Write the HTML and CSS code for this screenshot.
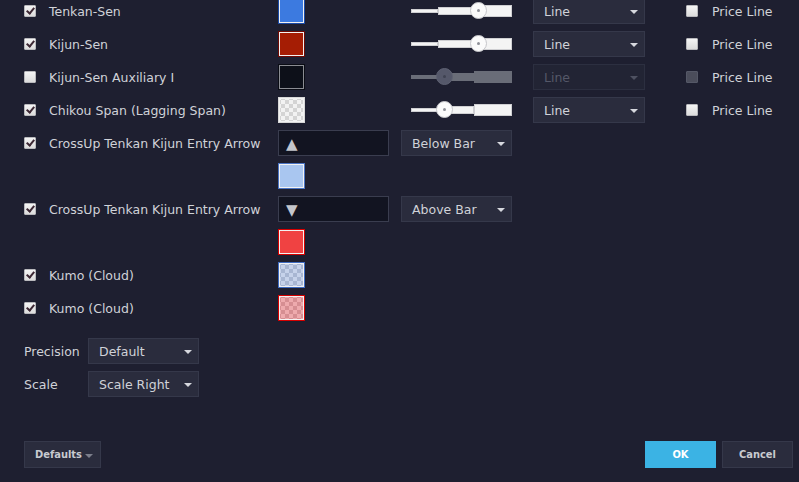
FILE: index.html
```html
<!DOCTYPE html>
<html lang="en">
<head>
  <meta charset="UTF-8">
  <title>Ichimoku - Style</title>
  <link rel="stylesheet" href="styles.css">
</head>
<body>
  <div class="dialog">
    <div class="rows">
      <!-- Lines -->
      <div class="row">
        <label class="name"><span class="check on"></span>Tenkan-Sen</label>
        <span class="swatch blue"></span>
        <div class="slider"><i class="s1"></i><i class="s2"></i><i class="s3"></i><b class="thumb" style="left: 59px"></b></div>
        <div class="select line">Line<span class="caret"></span></div>
        <label class="price"><span class="check"></span>Price Line</label>
      </div>
      <div class="row">
        <label class="name"><span class="check on"></span>Kijun-Sen</label>
        <span class="swatch red"></span>
        <div class="slider"><i class="s1"></i><i class="s2"></i><i class="s3"></i><b class="thumb" style="left: 59px"></b></div>
        <div class="select line">Line<span class="caret"></span></div>
        <label class="price"><span class="check"></span>Price Line</label>
      </div>
      <div class="row">
        <label class="name"><span class="check"></span>Kijun-Sen Auxiliary I</label>
        <span class="swatch black"></span>
        <div class="slider disabled"><i class="s1"></i><i class="s2"></i><i class="s3"></i><b class="thumb" style="left: 25px"></b></div>
        <div class="select line disabled">Line<span class="caret"></span></div>
        <label class="price"><span class="check disabled"></span>Price Line</label>
      </div>
      <div class="row">
        <label class="name"><span class="check on"></span>Chikou Span (Lagging Span)</label>
        <span class="swatch clear"></span>
        <div class="slider"><i class="s1"></i><i class="s2"></i><i class="s3"></i><b class="thumb" style="left: 25px"></b></div>
        <div class="select line">Line<span class="caret"></span></div>
        <label class="price"><span class="check"></span>Price Line</label>
      </div>

      <!-- Arrows -->
      <div class="row">
        <label class="name"><span class="check on"></span>CrossUp Tenkan Kijun Entry Arrow</label>
        <div class="symbol">▲</div>
        <div class="select place">Below Bar<span class="caret"></span></div>
      </div>
      <div class="row">
        <span class="name"></span>
        <span class="swatch sky"></span>
      </div>
      <div class="row">
        <label class="name"><span class="check on"></span>CrossUp Tenkan Kijun Entry Arrow</label>
        <div class="symbol">▼</div>
        <div class="select place">Above Bar<span class="caret"></span></div>
      </div>
      <div class="row">
        <span class="name"></span>
        <span class="swatch coral"></span>
      </div>

      <!-- Cloud -->
      <div class="row">
        <label class="name"><span class="check on"></span>Kumo (Cloud)</label>
        <span class="swatch cloud-up"></span>
      </div>
      <div class="row">
        <label class="name"><span class="check on"></span>Kumo (Cloud)</label>
        <span class="swatch cloud-down"></span>
      </div>
    </div>

    <div class="props">
      <div class="prop">
        <span class="prop-label">Precision</span>
        <div class="select">Default<span class="caret"></span></div>
      </div>
      <div class="prop">
        <span class="prop-label">Scale</span>
        <div class="select">Scale Right<span class="caret"></span></div>
      </div>
    </div>

    <div class="footer">
      <button class="btn">Defaults<span class="caret"></span></button>
      <div class="actions">
        <button class="btn ok">OK</button>
        <button class="btn">Cancel</button>
      </div>
    </div>
  </div>
</body>
</html>
```

FILE: styles.css
```css
body {
  margin: 0;
  background-color: #1e1f30;
  color: #d0d2d8;
  font-family: "DejaVu Sans", "Liberation Sans", sans-serif;
  font-size: 12.5px;
  overflow: hidden;
}
.dialog {
  width: 799px;
  height: 482px;
  box-sizing: border-box;
  padding: 0 6px 0 24px;
  display: flex;
  flex-direction: column;
}
.rows {
  margin-top: -2px;
}
.row {
  display: flex;
  align-items: center;
  height: 26px;
  margin-bottom: 7px;
}
.name {
  width: 254px;
  flex-shrink: 0;
  display: flex;
  align-items: center;
  gap: 13px;
  padding-top: 1px;
  white-space: nowrap;
}

/* checkbox */
.check {
  width: 12px;
  height: 12px;
  box-sizing: border-box;
  border: 1px solid #b9b9bd;
  border-radius: 1px;
  background: linear-gradient(#f4f4f4, #dcdcdc);
  position: relative;
  flex-shrink: 0;
  margin-top: -1px;
}
.check.on::after {
  content: "";
  position: absolute;
  left: 3px;
  top: 0px;
  width: 3px;
  height: 6px;
  border: solid #3d2834;
  border-width: 0 2px 2px 0;
  transform: rotate(40deg);
}
.check.disabled {
  background: #4b4d5b;
  border-color: #555867;
}

/* colour swatches */
.swatch {
  width: 27px;
  height: 26px;
  box-sizing: border-box;
  border: 1px solid #888;
  box-shadow: inset 0 0 0 1px #f2f2f2;
  flex-shrink: 0;
}
.swatch.blue { background: #3c7ae0; border-color: #1a4aa6; }
.swatch.red { background: #a51d04; border-color: #6e0a04; }
.swatch.black { background: #0d1019; border-color: #0a0c14; box-shadow: inset 0 0 0 1px #8a8c92; }
.swatch.clear {
  border-color: #d8d8d8;
  background: repeating-conic-gradient(#d4d4d4 0 25%, #f2f2f2 0 50%) 2px 2px / 8px 8px;
}
.swatch.sky { background: #a9c6f0; border-color: #4a74c4; }
.swatch.coral { background: #f04242; border-color: #d60000; }
.swatch.cloud-up {
  border-color: #3f6cc2;
  background: repeating-conic-gradient(#a8b6d2 0 25%, #c6d2ea 0 50%) 2px 2px / 8px 8px;
}
.swatch.cloud-down {
  border-color: #d60000;
  background: repeating-conic-gradient(#d68e92 0 25%, #eeaaad 0 50%) 2px 2px / 8px 8px;
}

/* width slider */
.slider {
  margin-left: 106px;
  width: 101px;
  height: 18px;
  display: flex;
  align-items: center;
  position: relative;
  flex-shrink: 0;
}
.slider i {
  box-sizing: border-box;
  background: #f4f4f4;
  border: 1px solid #cfcfd2;
}
.slider .s1 { width: 27px; height: 4px; }
.slider .s2 { width: 36px; height: 8px; }
.slider .s3 { width: 38px; height: 12px; }
.thumb {
  position: absolute;
  top: 0;
  width: 17px;
  height: 17px;
  box-sizing: border-box;
  border-radius: 50%;
  background: #fbfbfb;
  border: 1px solid #c6c6ca;
}
.thumb::after {
  content: "";
  position: absolute;
  left: 6px;
  top: 6px;
  width: 3px;
  height: 3px;
  border-radius: 50%;
  background: #8e9098;
}
.slider.disabled i {
  background: #6a6d78;
  border-color: #6a6d78;
}
.slider.disabled .thumb {
  background: #55586a;
  border-color: #5e6172;
}
.slider.disabled .thumb::after {
  background: #3f4252;
}

/* dropdowns */
.select {
  position: relative;
  width: 111px;
  height: 26px;
  box-sizing: border-box;
  padding: 1px 10px 0;
  line-height: 24px;
  background: #2a2c3d;
  border: 1px solid #35384a;
  white-space: nowrap;
  flex-shrink: 0;
}
.select.line {
  margin-left: 21px;
  width: 112px;
}
.select.place {
  margin-left: 12px;
}
.select.disabled {
  background: #222434;
  border-color: #2c2f40;
  color: #555868;
}
.caret {
  position: absolute;
  right: 6px;
  top: 11px;
  border-left: 4px solid transparent;
  border-right: 4px solid transparent;
  border-top: 4px solid #d6d8de;
}
.select.disabled .caret {
  border-top-color: #4e5161;
}
.price {
  margin-left: 41px;
  display: flex;
  align-items: center;
  gap: 14px;
  padding-top: 1px;
}

/* arrow symbol field */
.symbol {
  width: 111px;
  height: 26px;
  box-sizing: border-box;
  padding: 1px 0 0 7px;
  line-height: 24px;
  background: #121421;
  border: 1px solid #3a3d4f;
  color: #c4c6cc;
  font-size: 15px;
  flex-shrink: 0;
}

/* precision / scale */
.props {
  margin-top: 10px;
}
.prop {
  display: flex;
  align-items: center;
  height: 26px;
  margin-bottom: 7px;
}
.prop-label {
  width: 64px;
  padding-top: 1px;
}

/* buttons */
.footer {
  margin-top: 37px;
  display: flex;
  justify-content: space-between;
}
.actions {
  display: flex;
  gap: 6px;
}
.btn {
  position: relative;
  height: 27px;
  min-width: 71px;
  box-sizing: border-box;
  padding: 0 10px;
  background: #2a2c3d;
  border: 1px solid #35384a;
  color: #c8cad0;
  font-family: "DejaVu Sans Condensed", "DejaVu Sans", sans-serif;
  font-stretch: semi-condensed;
  font-size: 11px;
  font-weight: bold;
}
.footer > .btn {
  width: 77px;
  text-align: left;
  padding-left: 10px;
}
.footer > .btn .caret {
  right: 7px;
  top: 12px;
  border-top-color: #7c7f8c;
}
.btn.ok {
  background: #3bb3e4;
  border-color: #3bb3e4;
  color: #ffffff;
}
```
